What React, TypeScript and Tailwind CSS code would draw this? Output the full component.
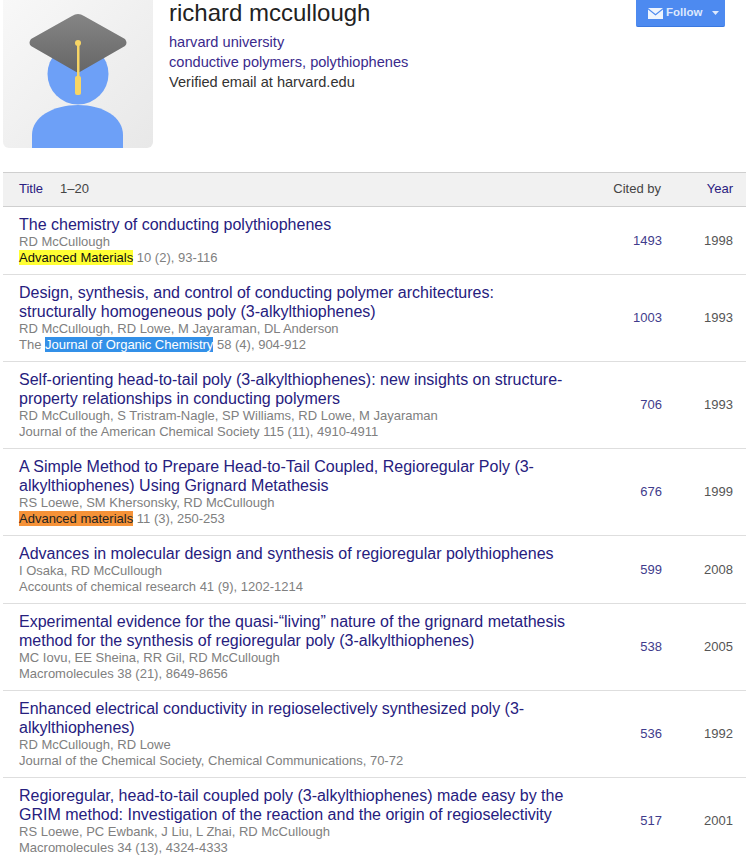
const rows = [
  { t: "The chemistry of conducting polythiophenes", a: "RD McCullough", v: <><span className="bg-[#ffff33] text-[#111]">Advanced Materials</span> 10 (2), 93-116</>, c: "1493", y: "1998" },
  { t: "Design, synthesis, and control of conducting polymer architectures: structurally homogeneous poly (3-alkylthiophenes)", a: "RD McCullough, RD Lowe, M Jayaraman, DL Anderson", v: <>The <span className="bg-[#3390e8] text-white">Journal of Organic Chemistry</span> 58 (4), 904-912</>, c: "1003", y: "1993" },
  { t: "Self-orienting head-to-tail poly (3-alkylthiophenes): new insights on structure-property relationships in conducting polymers", a: "RD McCullough, S Tristram-Nagle, SP Williams, RD Lowe, M Jayaraman", v: <>Journal of the American Chemical Society 115 (11), 4910-4911</>, c: "706", y: "1993" },
  { t: "A Simple Method to Prepare Head-to-Tail Coupled, Regioregular Poly (3-alkylthiophenes) Using Grignard Metathesis", a: "RS Loewe, SM Khersonsky, RD McCullough", v: <><span className="bg-[#f59238] text-[#222]">Advanced materials</span> 11 (3), 250-253</>, c: "676", y: "1999" },
  { t: "Advances in molecular design and synthesis of regioregular polythiophenes", a: "I Osaka, RD McCullough", v: <>Accounts of chemical research 41 (9), 1202-1214</>, c: "599", y: "2008" },
  { t: "Experimental evidence for the quasi-“living” nature of the grignard metathesis method for the synthesis of regioregular poly (3-alkylthiophenes)", a: "MC Iovu, EE Sheina, RR Gil, RD McCullough", v: <>Macromolecules 38 (21), 8649-8656</>, c: "538", y: "2005" },
  { t: "Enhanced electrical conductivity in regioselectively synthesized poly (3-alkylthiophenes)", a: "RD McCullough, RD Lowe", v: <>Journal of the Chemical Society, Chemical Communications, 70-72</>, c: "536", y: "1992" },
  { t: "Regioregular, head-to-tail coupled poly (3-alkylthiophenes) made easy by the GRIM method: Investigation of the reaction and the origin of regioselectivity", a: "RS Loewe, PC Ewbank, J Liu, L Zhai, RD McCullough", v: <>Macromolecules 34 (13), 4324-4333</>, c: "517", y: "2001" },
];

function Avatar() {
  return (
    <div className="w-[150px] h-[148px] rounded-b-[6px] bg-gradient-to-br from-[#f8f8f8] to-[#e8e8e8] overflow-hidden shrink-0">
      <svg width="150" height="148" viewBox="0 0 150 148">
        <defs>
          <linearGradient id="cap" x1="0" y1="0" x2="0" y2="1">
            <stop offset="0" stopColor="#858585" />
            <stop offset="1" stopColor="#666666" />
          </linearGradient>
        </defs>
        <circle cx="75" cy="74" r="30.5" fill="#6da0f7" />
        <path d="M29 148 V135 C29 117 50 105 75 105 C100 105 120 117 120 135 V148 Z" fill="#6da0f7" />
        <path d="M75 14 Q78 14 81 16 L122 39 Q125 43 122 46 L75 73 L28 46 Q25 43 28 39 L69 16 Q72 14 75 14 Z" fill="url(#cap)" />
        <rect x="74" y="43" width="2.5" height="36" fill="#f7d565" />
        <circle cx="75" cy="43" r="3" fill="#f7d565" />
        <rect x="72" y="76" width="6" height="19" rx="2" fill="#f7d565" />
      </svg>
    </div>
  );
}

export default function App() {
  return (
    <div className="w-[746px] h-[859px] overflow-hidden bg-white font-['Liberation_Sans',Arial,sans-serif]">
      <div className="h-[172px] flex pl-[3px]">
        <Avatar />
        <div className="ml-[16px] flex-1 -mt-[2px]">
          <div className="text-[24px] leading-[29px] text-[#222]">richard mccullough</div>
          <div className="mt-[5px] text-[14.6px] leading-[20px] text-[#3a2a8c]">harvard university</div>
          <div className="text-[14.6px] leading-[20px] text-[#3a2a8c]">conductive polymers, polythiophenes</div>
          <div className="text-[14.6px] leading-[20px] text-[#333]">Verified email at harvard.edu</div>
        </div>
        <div className="mr-[21px] w-[89px] h-[27px] bg-[#4d8af0] border-b border-[#3a78e0] rounded-b-[2px] flex items-center pl-[12px] gap-[3px] text-[11.5px] font-bold">
          <svg width="15" height="11" viewBox="0 0 15 11"><path d="M0 0 H15 L7.5 6 Z" fill="#eef4fe" /><path d="M0 1.5 L7.5 7.5 L15 1.5 V11 H0 Z" fill="#eef4fe" /></svg>
          <span className="text-[#dde8fd]">Follow</span>
          <svg className="ml-[7px]" width="7" height="4" viewBox="0 0 7 4"><path d="M0 0 H7 L3.5 4 Z" fill="#dde8fd" /></svg>
        </div>
      </div>

      <div className="ml-[3px] h-[35px] pb-[2px] flex items-center bg-[#f1f1f1] border-y border-[#cfcfcf] text-[13px] text-[#444]">
        <span className="ml-[16px] text-[#2a2080]">Title</span>
        <span className="ml-[17px]">1–20</span>
        <span className="ml-auto">Cited by</span>
        <span className="w-[72px] mr-[13px] text-right text-[#2a2080]">Year</span>
      </div>

      {rows.map((r, i) => (
        <div key={i} className="ml-[3px] flex items-center border-b border-[#dedede] py-[8px]">
          <div className="ml-[16px] w-[550px]">
            <div className="text-[16px] leading-[19px] text-[#26207e]">{r.t}</div>
            <div className="text-[13px] leading-[16px] text-[#808080]">{r.a}</div>
            <div className="text-[13px] leading-[16px] text-[#808080]">{r.v}</div>
          </div>
          <div className="w-[93px] text-right text-[13px] text-[#3f3c8c]">{r.c}</div>
          <div className="w-[71px] text-right text-[13px] text-[#555]">{r.y}</div>
        </div>
      ))}
    </div>
  );
}
